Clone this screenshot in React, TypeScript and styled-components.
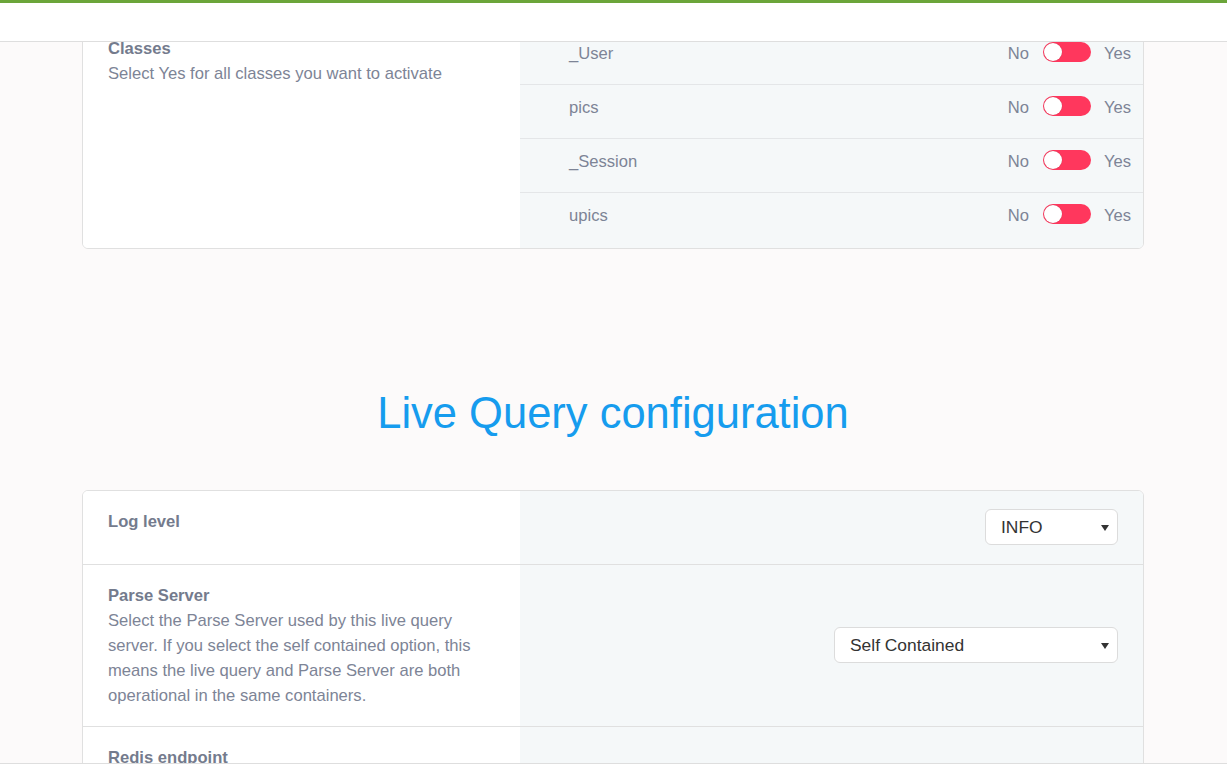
import styled, {createGlobalStyle} from "styled-components";

const GlobalStyle = createGlobalStyle`
  html, body {
    margin: 0;
    padding: 0;
    overflow: hidden;
    background: #fcfafa;
    font-family: "Liberation Sans", Arial, sans-serif;
  }
  * {
    box-sizing: border-box;
  }
`;

const TopBar = styled.header`
  position: fixed;
  top: 0;
  left: 0;
  right: 0;
  height: 42px;
  background: #fff;
  border-top: 3px solid #6ba53a;
  border-bottom: 1px solid #dedede;
  z-index: 10;
`;

const BottomLine = styled.div`
  position: fixed;
  left: 0;
  right: 0;
  bottom: 0;
  height: 1px;
  background: #dedede;
  z-index: 10;
`;

const Main = styled.main`
  width: 1062px;
  margin-left: 82px;
  padding-top: 17px;
`;

const Card = styled.section`
  background: #fff;
  border: 1px solid #e0e0e0;
  border-radius: 6px;
  overflow: hidden;
`;

const Split = styled.div<{ $last?: boolean }>`
  display: grid;
  grid-template-columns: 437px 1fr;
  border-bottom: ${props => props.$last ? "none" : "1px solid #e0e0e0"};
`;

const Info = styled.div`
  padding: 18px 40px 18px 25px;
  background: #fff;
`;

const Title = styled.div`
  font-size: 16.6px;
  line-height: 25px;
  font-weight: bold;
  color: #747b8d;
`;

const Desc = styled.div`
  font-size: 16.6px;
  line-height: 25px;
  color: #7d8496;
`;

const Side = styled.div`
  background: #f5f8f9;
  display: flex;
  align-items: center;
  justify-content: flex-end;
  padding: 18px 25px 19px;
`;

const ClassList = styled.div`
  background: #f5f8f9;
  padding-top: 13px;
`;

const ClassRow = styled.div<{ $last?: boolean }>`
  height: ${props => props.$last ? "55px" : "54px"};
  display: flex;
  align-items: flex-start;
  padding: 13px 12px 0 49px;
  border-bottom: ${props => props.$last ? "none" : "1px solid #e4e6e8"};
`;

const ClassName = styled.span`
  flex: 1;
  font-size: 16.6px;
  line-height: 20px;
  color: #7d8496;
`;

const SwitchText = styled.span`
  font-size: 16.6px;
  line-height: 20px;
  color: #7d8496;
`;

const Track = styled.span`
  position: relative;
  display: inline-block;
  width: 48px;
  height: 20px;
  border-radius: 10px;
  background: #ff375d;
  margin: -2px 13px 0 14px;
`;

const Knob = styled.span`
  position: absolute;
  left: 1px;
  top: 1px;
  width: 18px;
  height: 18px;
  border-radius: 50%;
  background: #fff;
  box-shadow: 0 0 1px rgba(0, 0, 0, 0.3);
`;

const SectionTitle = styled.h2`
  margin: 139px 0 52px;
  text-align: center;
  font-size: 43.5px;
  line-height: 50px;
  font-weight: normal;
  color: #169cee;
`;

const SelectWrap = styled.div<{ $width: number }>`
  position: relative;
  width: ${props => props.$width}px;

  &::after {
    content: "";
    position: absolute;
    right: 9px;
    top: 16px;
    border-left: 4px solid transparent;
    border-right: 4px solid transparent;
    border-top: 6px solid #333;
    pointer-events: none;
  }
`;

const Select = styled.select`
  appearance: none;
  width: 100%;
  height: 36px;
  padding: 0 28px 0 15px;
  border: 1px solid #dcdcdc;
  border-radius: 6px;
  background: #fff;
  font-family: "Liberation Sans", Arial, sans-serif;
  font-size: 17.4px;
  color: #333;
  outline: none;
`;

const classes = ["_User", "pics", "_Session", "upics"];

function App() {
    return (
        <>
            <GlobalStyle/>
            <TopBar/>
            <Main>
                <Card>
                    <Split $last>
                        <Info>
                            <Title>Classes</Title>
                            <Desc>Select Yes for all classes you want to activate</Desc>
                        </Info>
                        <ClassList>
                            {classes.map((name, i) => (
                                <ClassRow key={name} $last={i === classes.length - 1}>
                                    <ClassName>{name}</ClassName>
                                    <SwitchText>No</SwitchText>
                                    <Track><Knob/></Track>
                                    <SwitchText>Yes</SwitchText>
                                </ClassRow>
                            ))}
                        </ClassList>
                    </Split>
                </Card>

                <SectionTitle>Live Query configuration</SectionTitle>

                <Card>
                    <Split>
                        <Info>
                            <Title>Log level</Title>
                        </Info>
                        <Side>
                            <SelectWrap $width={133}>
                                <Select defaultValue="INFO">
                                    <option>INFO</option>
                                    <option>ERROR</option>
                                    <option>VERBOSE</option>
                                </Select>
                            </SelectWrap>
                        </Side>
                    </Split>
                    <Split>
                        <Info>
                            <Title>Parse Server</Title>
                            <Desc>
                                Select the Parse Server used by this live query server. If you select the
                                self contained option, this means the live query and Parse Server are both
                                operational in the same containers.
                            </Desc>
                        </Info>
                        <Side>
                            <SelectWrap $width={284}>
                                <Select defaultValue="Self Contained">
                                    <option>Self Contained</option>
                                </Select>
                            </SelectWrap>
                        </Side>
                    </Split>
                    <Split $last>
                        <Info>
                            <Title>Redis endpoint</Title>
                            <Desc>&nbsp;</Desc>
                            <Desc>&nbsp;</Desc>
                        </Info>
                        <Side/>
                    </Split>
                </Card>
            </Main>
            <BottomLine/>
        </>
    );
}

export default App;
